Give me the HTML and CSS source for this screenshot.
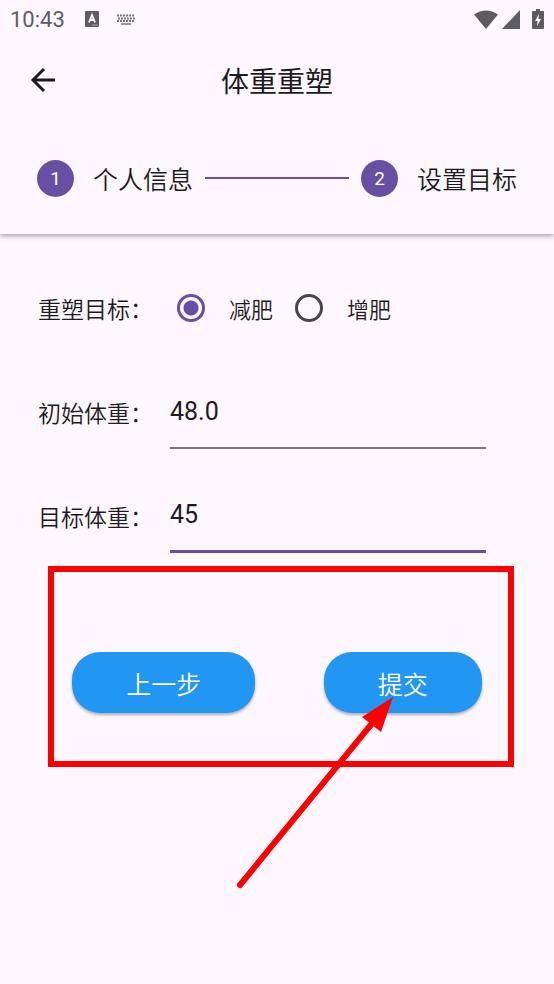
FILE: index.html
```html
<!DOCTYPE html>
<html lang="zh-CN">

<head>
    <meta charset="UTF-8">
    <meta name="viewport" content="width=device-width, initial-scale=1.0">
    <title>体重重塑</title>
    <link rel="stylesheet" href="styles.css">
</head>

<body>
    <header class="header">
        <div class="status-bar">
            <span class="time">10:43</span>
            <svg class="icon-input" width="14" height="16" viewBox="0 0 14 16">
                <rect width="14" height="16" rx="1" fill="#5f5b62" />
                <path d="M4 11.5 7 4l3 7.5M5 9h4" fill="none" stroke="#fef7ff" stroke-width="1.8" />
                <path d="M7.500 14h5" stroke="#fef7ff" stroke-width="1" stroke-dasharray="1 1" />
            </svg>
            <svg class="icon-keyboard" width="20" height="11" viewBox="0 0 20 11">
                <g fill="none" stroke="#77737a" stroke-width="2">
                    <path d="M1 1.500h18M1 7h18" stroke-dasharray="2 1" />
                    <path d="M2 4.500h17" stroke-dasharray="2 1" />
                    <path d="M5 10h10" stroke-width="1.500" />
                </g>
            </svg>
            <div class="status-right">
                <svg width="24" height="19" viewBox="0 0 24 19">
                    <path d="M0 4.500Q12-3.500 24 4.500L12 19Z" fill="#5f5b62" />
                </svg>
                <svg width="18" height="19" viewBox="0 0 18 19">
                    <path d="M18 0v19H0Z" fill="#5f5b62" />
                </svg>
                <svg class="icon-battery" width="12" height="20" viewBox="0 0 12 20">
                    <path d="M4 0h4v2h3q1 0 1 1v16q0 1-1 1H1q-1 0-1-1V3q0-1 1-1h3Z" fill="#5f5b62" />
                    <path d="M7 5 3 12h2.500L5 17l4-7H6.500Z" fill="#fef7ff" />
                </svg>
            </div>
        </div>

        <div class="app-bar">
            <button class="back" type="button" aria-label="返回">
                <svg width="26" height="26" viewBox="0 0 26 26">
                    <path d="M25 13H3M14 2 3 13l11 11" fill="none" stroke="#1d1b20" stroke-width="3" />
                </svg>
            </button>
            <h1 class="title">体重重塑</h1>
        </div>

        <div class="stepper">
            <span class="step-number">1</span>
            <span class="step-label">个人信息</span>
            <span class="step-line"></span>
            <span class="step-number">2</span>
            <span class="step-label">设置目标</span>
        </div>
    </header>

    <main>
        <form class="form">
            <div class="row" role="radiogroup" aria-labelledby="goal-label">
                <span class="label" id="goal-label">重塑目标：</span>
                <div class="options">
                    <label class="option"><input type="radio" name="goal" value="lose" checked>减肥</label>
                    <label class="option"><input type="radio" name="goal" value="gain">增肥</label>
                </div>
            </div>
            <div class="row">
                <label class="label" for="start-weight">初始体重：</label>
                <input class="field" id="start-weight" type="text" inputmode="decimal" value="48.0">
            </div>
            <div class="row">
                <label class="label" for="target-weight">目标体重：</label>
                <input class="field active" id="target-weight" type="text" inputmode="decimal" value="45">
            </div>

            <div class="actions">
                <button class="btn" type="button">上一步</button>
                <button class="btn" type="submit">提交</button>
                <div class="highlight"></div>
                <svg class="arrow" width="160" height="194" viewBox="0 0 160 194">
                    <path d="M4 188 138 24" stroke="#f00" stroke-width="6" stroke-linecap="round" />
                    <path d="M157 0 126 20 145 35Z" fill="#f00" />
                </svg>
            </div>
        </form>
    </main>
</body>

</html>
```
FILE: styles.css
```css
* {
    margin: 0;
    padding: 0;
    box-sizing: border-box;
}

body {
    min-height: 100vh;
    background-color: #fef7ff;
    color: #1d1b20;
    font-family: Roboto, "Noto Sans CJK SC", sans-serif;
    font-size: 24px;
}

button,
input {
    font: inherit;
    color: inherit;
    border: none;
    background: none;
}

svg {
    display: block;
}

.header {
    height: 234px;
    box-shadow: 0 2px 5px rgba(0, 0, 0, 0.35);
}

.status-bar {
    display: flex;
    align-items: center;
    height: 38px;
    padding: 0 10px;
    color: #5f5b62;
}

.time {
    font-size: 22px;
}

.icon-input {
    margin-left: 20px;
}

.icon-keyboard {
    margin-left: 17px;
}

.status-right {
    display: flex;
    align-items: center;
    gap: 4px;
    margin-left: auto;
}

.icon-battery {
    margin-left: 8px;
}

.app-bar {
    display: grid;
    grid-template-columns: 26px 1fr 26px;
    align-items: center;
    height: 84px;
    padding: 0 30px;
}

.back {
    cursor: pointer;
}

.title {
    padding-top: 6px;
    font-size: 28px;
    font-weight: 400;
    line-height: 40px;
    text-align: center;
}

.stepper {
    display: flex;
    align-items: center;
    height: 112px;
    padding: 0 37px;
}

.step-number {
    width: 37px;
    height: 37px;
    border-radius: 50%;
    background-color: #6750a4;
    color: white;
    font-size: 19px;
    line-height: 38px;
    text-align: center;
}

.step-label {
    margin-left: 19px;
    font-family: "Noto Sans CJK SC", sans-serif;
    font-size: 25px;
    font-weight: 350;
}

.step-line {
    flex: 1;
    height: 2px;
    margin: 0 12px;
    background-color: #6750a4;
}

.form {
    padding: 37px 38px;
}

.row {
    display: grid;
    grid-template-columns: 132px 1fr;
    align-items: center;
    height: 74px;
    margin-bottom: 30px;
    padding-right: 30px;
}

.label {
    font-family: "Noto Sans CJK SC", sans-serif;
    font-size: 23px;
    font-weight: 350;
    white-space: nowrap;
}

.options {
    display: flex;
    gap: 22px;
    padding-left: 7px;
}

.option {
    display: flex;
    align-items: center;
    gap: 24px;
    font-family: "Noto Sans CJK SC", sans-serif;
    font-size: 22px;
    font-weight: 350;
}

.option input {
    appearance: none;
    width: 28px;
    height: 28px;
    border: 3px solid #49454f;
    border-radius: 50%;
}

.option input:checked {
    border-color: #6750a4;
    background: radial-gradient(circle, #6750a4 7px, transparent 8px);
}

.field {
    width: 100%;
    height: 74px;
    border-bottom: 2px solid #79747e;
    font-size: 25px;
    outline: none;
}

.field.active,
.field:focus {
    border-bottom: 3px solid #6750a4;
}

.actions {
    position: relative;
    display: flex;
    justify-content: space-around;
    margin-top: 99px;
}

.btn {
    height: 61px;
    padding: 0 54px;
    border-radius: 28px;
    background-color: #2196f3;
    box-shadow: 0 2px 3px rgba(0, 0, 0, 0.3);
    color: white;
    font-family: "Noto Sans CJK SC", sans-serif;
    font-size: 25px;
    font-weight: 350;
    cursor: pointer;
}

/* frame and arrow drawn over the buttons */
.highlight {
    position: absolute;
    inset: -86px 2px -54px 10px;
    border: 6px solid #f00;
    pointer-events: none;
}

.arrow {
    position: absolute;
    top: 45px;
    right: 120px;
    pointer-events: none;
}
```
